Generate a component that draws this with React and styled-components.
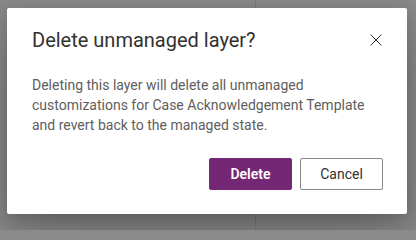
import styled, { createGlobalStyle } from "styled-components";

const GlobalStyle = createGlobalStyle`
    html, body {
        margin: 0;
        padding: 0;
        background: #8a8a8a;
    }
    body {
        font-family: Roboto, "Noto Sans", sans-serif;
    }
`

const Page = styled.div`
    position: relative;
    width: 416px;
    height: 230px;
    overflow: hidden;
    background: #8a8a8a;
`

const Backdrop = styled.div`
    display: grid;
    grid-template-columns: 256px 1fr;
    height: 100%;
`

const BackColumn = styled.div`
    border-right: ${props => props.divider ? '1px solid #7b7b7b' : 'none'};
`

const Overlay = styled.div`
    position: absolute;
    inset: 0;
    display: flex;
    align-items: flex-start;
    padding: 8px 0 0 7px;
`

const Dialog = styled.div`
    width: 400px;
    height: 206px;
    box-sizing: border-box;
    background: #ffffff;
    border-radius: 2px;
    padding: 18px 24px 24px 25px;
    display: flex;
    flex-direction: column;
    box-shadow: 0 25.6px 57.6px 0 rgba(0, 0, 0, 0.22), 0 4.8px 14.4px 0 rgba(0, 0, 0, 0.18);
`

const Header = styled.div`
    display: flex;
    align-items: center;
    justify-content: space-between;
    height: 28px;
`

const Title = styled.h2`
    margin: 0;
    font-size: 20px;
    line-height: 28px;
    font-weight: 400;
    color: #323130;
`

const CloseButton = styled.button`
    width: 32px;
    height: 32px;
    margin-right: -9px;
    border: none;
    background: transparent;
    display: flex;
    align-items: center;
    justify-content: center;
    padding: 0;
    color: #323130;
    cursor: pointer;
`

const Body = styled.p`
    margin: 21px 0 0;
    font-size: 14px;
    line-height: 20px;
    color: #605e5c;
`

const Footer = styled.div`
    margin-top: auto;
    display: flex;
    justify-content: flex-end;
    gap: 8px;
`

const Button = styled.button`
    height: 32px;
    min-width: 83px;
    padding: 0 16px;
    box-sizing: border-box;
    border-radius: 2px;
    font-family: inherit;
    font-size: 14px;
    font-weight: ${props => props.primary ? 600 : 400};
    background: ${props => props.primary ? '#742774' : '#ffffff'};
    color: ${props => props.primary ? '#ffffff' : '#323130'};
    border: 1px solid ${props => props.primary ? '#742774' : '#8a8886'};
    cursor: pointer;
`

function DeleteLayerDialog () {
    return (
        <Dialog role="dialog">
            <Header>
                <Title>Delete unmanaged layer?</Title>
                <CloseButton aria-label="Close">
                    <svg width="12" height="12" viewBox="0 0 12 12">
                        <path d="M0.5 0.5 L11.5 11.5 M11.5 0.5 L0.5 11.5" stroke="currentColor" strokeWidth="1" fill="none" />
                    </svg>
                </CloseButton>
            </Header>
            <Body>
                Deleting this layer will delete all unmanaged<br />
                customizations for Case Acknowledgement Template<br />
                and revert back to the managed state.
            </Body>
            <Footer>
                <Button primary>Delete</Button>
                <Button>Cancel</Button>
            </Footer>
        </Dialog>
    )
}

export default function App () {
    return (
        <Page>
            <GlobalStyle />
            <Backdrop>
                <BackColumn divider />
                <BackColumn />
            </Backdrop>
            <Overlay>
                <DeleteLayerDialog />
            </Overlay>
        </Page>
    )
}
